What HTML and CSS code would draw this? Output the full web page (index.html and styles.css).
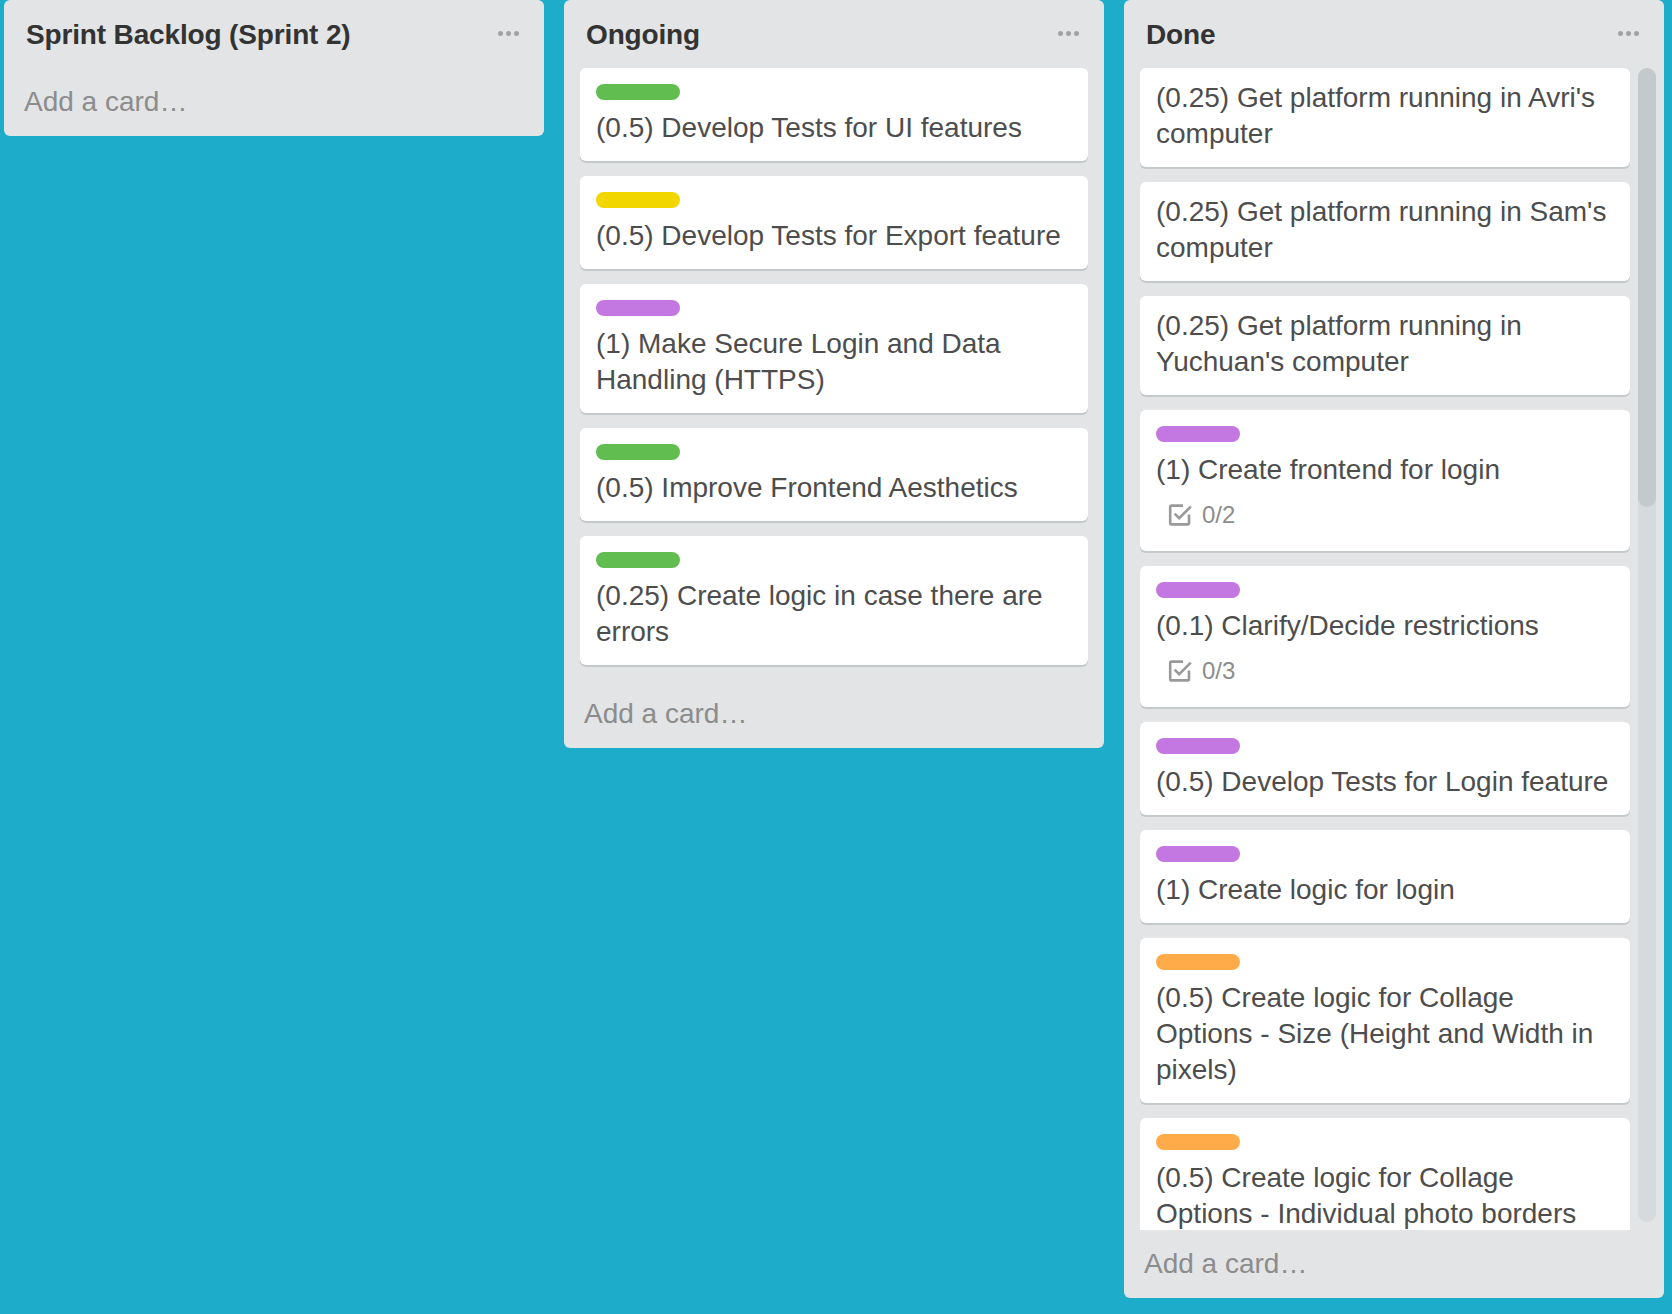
FILE: index.html
```html
<!DOCTYPE html>
<html lang="en">
<head>
<meta charset="utf-8">
<title>Board</title>
<link rel="stylesheet" href="styles.css">
</head>
<body>
<div class="board">
  <div class="list">
    <div class="list-header">
      <h2 class="list-title">Sprint Backlog (Sprint 2)</h2>
      <span class="list-menu"><i></i><i></i><i></i></span>
    </div>
    <div class="composer">Add a card…</div>
  </div>

  <div class="list">
    <div class="list-header">
      <h2 class="list-title">Ongoing</h2>
      <span class="list-menu"><i></i><i></i><i></i></span>
    </div>
    <div class="cards">
      <div class="card"><div class="labels"><span class="label green"></span></div><div class="card-title">(0.5) Develop Tests for UI features</div></div>
      <div class="card"><div class="labels"><span class="label yellow"></span></div><div class="card-title">(0.5) Develop Tests for Export feature</div></div>
      <div class="card"><div class="labels"><span class="label purple"></span></div><div class="card-title">(1) Make Secure Login and Data Handling (HTTPS)</div></div>
      <div class="card"><div class="labels"><span class="label green"></span></div><div class="card-title">(0.5) Improve Frontend Aesthetics</div></div>
      <div class="card"><div class="labels"><span class="label green"></span></div><div class="card-title">(0.25) Create logic in case there are errors</div></div>
    </div>
    <div class="composer">Add a card…</div>
  </div>

  <div class="list">
    <div class="list-header">
      <h2 class="list-title">Done</h2>
      <span class="list-menu"><i></i><i></i><i></i></span>
    </div>
    <div class="scroll-wrap">
      <div class="cards scroll-cards">
        <div class="card"><div class="card-title">(0.25) Get platform running in Avri's computer</div></div>
        <div class="card"><div class="card-title">(0.25) Get platform running in Sam's computer</div></div>
        <div class="card"><div class="card-title">(0.25) Get platform running in Yuchuan's computer</div></div>
        <div class="card">
          <div class="labels"><span class="label purple"></span></div>
          <div class="card-title">(1) Create frontend for login</div>
          <div class="badges">
            <svg class="check-icon" viewBox="0 0 24 24" width="24" height="24" aria-hidden="true"><path d="M15 2.6H3.4A1.2 1.2 0 0 0 2.2 3.8v16.4a1.2 1.2 0 0 0 1.2 1.2h16.4a1.2 1.2 0 0 0 1.2-1.2V11.5" fill="none" stroke="#999" stroke-width="2.6"/><path d="M6.6 10.6l4.6 4.6L22.8 3.6" fill="none" stroke="#999" stroke-width="2.6"/></svg>
            <span class="badge-text">0/2</span>
          </div>
        </div>
        <div class="card">
          <div class="labels"><span class="label purple"></span></div>
          <div class="card-title">(0.1) Clarify/Decide restrictions</div>
          <div class="badges">
            <svg class="check-icon" viewBox="0 0 24 24" width="24" height="24" aria-hidden="true"><path d="M15 2.6H3.4A1.2 1.2 0 0 0 2.2 3.8v16.4a1.2 1.2 0 0 0 1.2 1.2h16.4a1.2 1.2 0 0 0 1.2-1.2V11.5" fill="none" stroke="#999" stroke-width="2.6"/><path d="M6.6 10.6l4.6 4.6L22.8 3.6" fill="none" stroke="#999" stroke-width="2.6"/></svg>
            <span class="badge-text">0/3</span>
          </div>
        </div>
        <div class="card"><div class="labels"><span class="label purple"></span></div><div class="card-title">(0.5) Develop Tests for Login feature</div></div>
        <div class="card"><div class="labels"><span class="label purple"></span></div><div class="card-title">(1) Create logic for login</div></div>
        <div class="card"><div class="labels"><span class="label orange"></span></div><div class="card-title">(0.5) Create logic for Collage Options - Size (Height and Width in pixels)</div></div>
        <div class="card"><div class="labels"><span class="label orange"></span></div><div class="card-title">(0.5) Create logic for Collage Options - Individual photo borders</div></div>
      </div>
      <div class="scrollbar"><div class="thumb"></div></div>
    </div>
    <div class="composer">Add a card…</div>
  </div>
</div>
</body>
</html>
```

FILE: styles.css
```css
html, body {
  margin: 0;
  padding: 0;
  background: #1dadcb;
  font-family: "Liberation Sans", Arial, sans-serif;
}

.board {
  display: flex;
  align-items: flex-start;
  gap: 20px;
  padding-left: 4px;
}

.list {
  width: 540px;
  background: #e2e4e6;
  border-radius: 6px;
  padding-bottom: 8px;
}

.list-header {
  display: flex;
  align-items: center;
  justify-content: space-between;
  padding: 17px 25px 15px 22px;
}

.list-title {
  margin: 0;
  font-size: 28px;
  line-height: 36px;
  font-weight: bold;
  color: #333;
  letter-spacing: -0.15px;
}

.list-menu {
  display: flex;
  gap: 3px;
  margin-top: -3px;
}

.list-menu i {
  display: block;
  width: 5px;
  height: 5px;
  border-radius: 50%;
  background: #a3a3a3;
}

.cards {
  display: flow-root;
  padding: 0 16px;
}

.card {
  background: #fff;
  border-radius: 6px;
  box-shadow: 0 2px 0 #c4c9cc;
  padding: 12px 16px 15px;
  margin-bottom: 15px;
}

.labels {
  display: flex;
  margin: 4px 0 10px;
}

.label {
  display: block;
  width: 84px;
  height: 16px;
  border-radius: 8px;
}

.green { background: #61bd4f; }
.yellow { background: #f2d600; }
.purple { background: #c377e0; }
.orange { background: #ffab4a; }

.card-title {
  font-size: 28px;
  line-height: 36px;
  color: #4d4d4d;
}

.badges {
  display: flex;
  align-items: center;
  height: 36px;
  margin: 9px 0 3px 12px;
}

.check-icon {
  display: block;
}

.badge-text {
  margin-left: 10px;
  font-size: 24px;
  color: #8c8c8c;
}

.composer {
  margin-top: 8px;
  padding: 8px 16px 8px 20px;
  font-size: 28px;
  line-height: 36px;
  color: #8c8c8c;
}

.scroll-wrap {
  display: flex;
  height: 1162px;
  margin: 0 8px 0 16px;
}

.scroll-cards {
  flex: 1;
  padding: 0;
  overflow: hidden;
}

.scrollbar {
  width: 18px;
  height: 1154px;
  margin-left: 8px;
  background: #d6dadc;
  border-radius: 9px;
}

.thumb {
  height: 439px;
  background: #c4c9cc;
  border-radius: 9px;
}
```
